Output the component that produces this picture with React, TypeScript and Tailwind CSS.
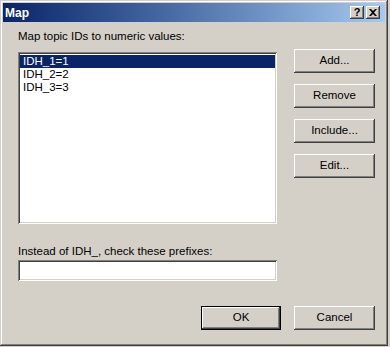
import React from 'react';

const font = { fontFamily: '"Liberation Sans", Arial, sans-serif' };

const raised =
  'shadow-[inset_-1px_-1px_#404040,inset_1px_1px_#ffffff,inset_-2px_-2px_#808080,inset_2px_2px_#d4d0c8]';
const sunken =
  'shadow-[inset_1px_1px_#808080,inset_-1px_-1px_#ffffff,inset_2px_2px_#404040,inset_-2px_-2px_#d4d0c8]';

function Button({ label, isDefault = false, width = 'w-[81px]' }: { label: string; isDefault?: boolean; width?: string }) {
  if (isDefault) {
    return (
      <div className={`${width} h-[24px] border border-black`}>
        <button
          className={`flex h-full w-full items-center justify-center bg-[#d4d0c8] text-[11.5px] text-black ${raised}`}
        >
          {label}
        </button>
      </div>
    );
  }
  return (
    <button
      className={`${width} flex h-[24px] items-center justify-center bg-[#d4d0c8] text-[11.5px] text-black ${raised}`}
    >
      {label}
    </button>
  );
}

function CaptionButton({ children }: { children: React.ReactNode }) {
  return (
    <div className={`flex h-[13px] w-[14px] items-center justify-center bg-[#d4d0c8] ${raised}`}>{children}</div>
  );
}

const items = ['IDH_1=1', 'IDH_2=2', 'IDH_3=3'];

export default function App() {
  return (
    <div className="h-[347px] w-[390px] bg-[#d4d0c8]" style={font}>
      <div
        className={`flex h-[346px] w-[388px] flex-col bg-[#d4d0c8] p-[3px] shadow-[inset_-1px_-1px_#404040,inset_1px_1px_#d4d0c8,inset_-2px_-2px_#808080,inset_2px_2px_#ffffff]`}
      >
        {/* Title bar */}
        <div className="flex h-[19px] items-center bg-gradient-to-r from-[#0a246a] to-[#a6caf0] pl-[2px] pr-[5px]">
          <span className="flex-1 text-[12px] font-bold leading-none text-white">Map</span>
          <div className="flex gap-[2px]">
            <CaptionButton>
              <span className="text-[11px] font-bold leading-none text-black">?</span>
            </CaptionButton>
            <CaptionButton>
              <svg width="8" height="7" viewBox="0 0 8 7">
                <path d="M0 0h2l2 2 2-2h2L5 3.5 8 7H6L4 5 2 7H0l3-3.5z" fill="#000" />
              </svg>
            </CaptionButton>
          </div>
        </div>

        {/* Content */}
        <div className="flex flex-col pl-[15px] pr-[10px] pt-[8px] text-[11.5px] text-black">
          <div className="flex">
            <div className="flex w-[259px] flex-col">
              <div className="h-[13px] leading-[13px]">Map topic IDs to numeric values:</div>
              <div className={`mt-[9px] h-[172px] bg-white p-[2px] ${sunken}`}>
                <div className="flex flex-col pt-[1px]">
                  {items.map((it, i) => (
                    <div
                      key={it}
                      className={`h-[13px] pl-[3px] leading-[13px] ${i === 0 ? 'bg-[#0a246a] text-white' : 'text-black'}`}
                    >
                      {it}
                    </div>
                  ))}
                </div>
              </div>
            </div>
            <div className="ml-[17px] mt-[19px] flex flex-col gap-[11px]">
              <Button label="Add..." />
              <Button label="Remove" />
              <Button label="Include..." />
              <Button label="Edit..." />
            </div>
          </div>

          <div className="mt-[21px] h-[13px] leading-[13px]">Instead of IDH_, check these prefixes:</div>
          <div className={`mt-[2px] h-[21px] w-[259px] bg-white ${sunken}`} />

          <div className="mt-[25px] flex justify-end gap-[13px]">
            <Button label="OK" isDefault width="w-[80px]" />
            <Button label="Cancel" />
          </div>
        </div>
      </div>
    </div>
  );
}
